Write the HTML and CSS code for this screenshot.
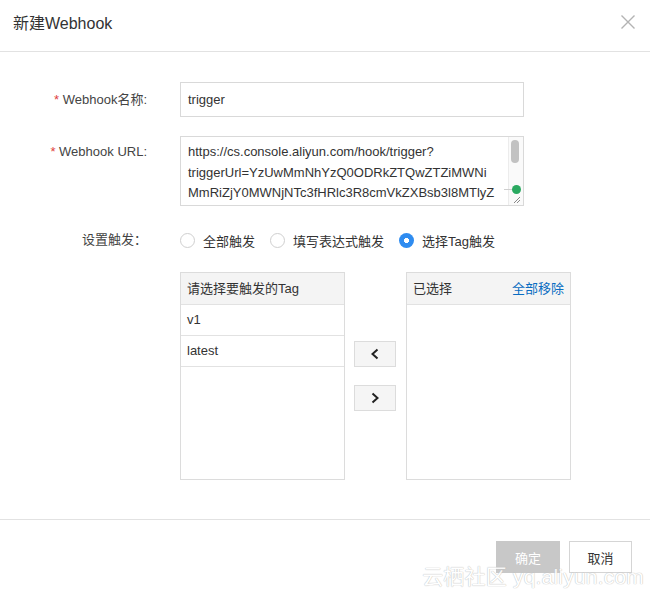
FILE: index.html
```html
<!DOCTYPE html>
<html>
<head>
<meta charset="utf-8">
<link rel="stylesheet" href="styles.css">
</head>
<body>
<div class="dialog">
  <div class="header">
    <div class="title">新建Webhook</div>
    <div class="close">
      <svg width="16" height="16" viewBox="0 0 16 16"><path d="M1.5 1.5 L14.5 14.5 M14.5 1.5 L1.5 14.5" stroke="#b3b3b3" stroke-width="1.4" fill="none"/></svg>
    </div>
  </div>
  <div class="body">
    <div class="form">
      <div class="label row1"><span class="req">*</span> Webhook名称:</div>
      <div class="input">trigger</div>

      <div class="label row2"><span class="req">*</span> Webhook URL:</div>
      <div class="textarea">
        <div class="ta-text">
          <span>https://cs.console.aliyun.com/hook/trigger?</span>
          <span>triggerUrl=YzUwMmNhYzQ0ODRkZTQwZTZiMWNi</span>
          <span>MmRiZjY0MWNjNTc3fHRlc3R8cmVkZXBsb3l8MTlyZ</span>
          <span>mVubW5pcmdncXu=&amp;secret=6e594f4056575594799</span>
        </div>
        <div class="ta-scroll">
          <div class="thumb"></div>
          <div class="dot-line"></div>
          <div class="dot"></div>
          <svg class="grip" width="8" height="8" viewBox="0 0 8 8"><path d="M7 1 L1 7 M7 4 L4 7" stroke="#888" stroke-width="1"/></svg>
        </div>
      </div>

      <div class="label row3">设置触发：</div>
      <div class="radios">
        <label class="radio"><span class="circle"></span>全部触发</label>
        <label class="radio"><span class="circle"></span>填写表达式触发</label>
        <label class="radio"><span class="circle checked"></span>选择Tag触发</label>
      </div>

      <div></div>
      <div class="transfer">
        <div class="box">
          <div class="box-head">请选择要触发的Tag</div>
          <div class="item">v1</div>
          <div class="item">latest</div>
        </div>
        <div class="ops">
          <div class="op">
            <svg width="10" height="12" viewBox="0 0 10 12"><path d="M7.5 1.5 L2.5 6 L7.5 10.5" stroke="#222" stroke-width="2" fill="none"/></svg>
          </div>
          <div class="op">
            <svg width="10" height="12" viewBox="0 0 10 12"><path d="M2.5 1.5 L7.5 6 L2.5 10.5" stroke="#222" stroke-width="2" fill="none"/></svg>
          </div>
        </div>
        <div class="box">
          <div class="box-head split"><span>已选择</span><span class="link">全部移除</span></div>
        </div>
      </div>
    </div>
  </div>
  <div class="footer">
    <div class="btn primary">确定</div>
    <div class="btn">取消</div>
  </div>
  <div class="watermark">云栖社区 yq.aliyun.com</div>
</div>
</body>
</html>
```

FILE: styles.css
```css
* { box-sizing: border-box; }
html, body { margin: 0; padding: 0; background: #fff; }
body {
  font-family: "Liberation Sans", "Noto Sans CJK SC", sans-serif;
  font-size: 13px;
  color: #333;
}
.dialog {
  position: relative;
  width: 650px;
  height: 593px;
  display: flex;
  flex-direction: column;
}
.header {
  height: 52px;
  border-bottom: 1px solid #e2e2e2;
  display: flex;
  align-items: center;
  justify-content: space-between;
  padding: 0 14px 8px 13px;
}
.title { font-size: 16px; color: #333; }
.close { display: flex; width: 16px; height: 16px; }
.body { padding: 30px 0 40px 0; flex: 0 0 auto; height: 467px; }
.form {
  display: grid;
  grid-template-columns: 147px auto;
  justify-content: start;
  column-gap: 33px;
  row-gap: 19px;
  align-items: start;
}
.label { text-align: right; color: #444; line-height: 20px; }
.label.row1 { padding-top: 8px; }
.label.row2 { padding-top: 6px; }
.label.row3 { padding-top: 5px; }
.req { color: #e0403e; }
.input {
  width: 344px;
  height: 35px;
  border: 1px solid #d9d9d9;
  padding: 0 7px;
  line-height: 33px;
  color: #333;
}
.textarea {
  width: 344px;
  height: 70px;
  border: 1px solid #d9d9d9;
  display: flex;
  overflow: hidden;
}
.ta-text {
  flex: 1;
  padding: 5px 0 0 7px;
  line-height: 20.6px;
  white-space: nowrap;
  overflow: hidden;
  color: #333;
}
.ta-text span { display: block; }
.ta-scroll {
  position: relative;
  width: 15px;
  border-left: 1px solid #ececec;
  background: #fafafa;
}
.thumb {
  position: absolute;
  left: 2px;
  top: 3px;
  width: 8px;
  height: 23px;
  border-radius: 4px;
  background: #c2c2c2;
}
.dot-line {
  position: absolute;
  left: -5px;
  top: 52px;
  width: 10px;
  height: 1px;
  background: #cfcfcf;
}
.dot {
  position: absolute;
  left: 3px;
  top: 48px;
  width: 9px;
  height: 9px;
  border-radius: 50%;
  background: #2aa960;
}
.grip { position: absolute; right: 2px; bottom: 1px; }
.radios {
  display: flex;
  align-items: center;
  height: 30px;
  gap: 15px;
}
.radio { display: flex; align-items: center; gap: 8px; color: #333; }
.circle {
  width: 15px;
  height: 15px;
  border-radius: 50%;
  border: 1px solid #cfcfcf;
  background: #fff;
}
.circle.checked {
  border: none;
  background: radial-gradient(circle, #fff 0 2.3px, #2f8cf0 2.8px);
}
.transfer {
  display: flex;
  align-items: center;
  gap: 9px;
  margin-top: -2px;
}
.box {
  width: 165px;
  height: 208px;
  border: 1px solid #dcdcdc;
  display: flex;
  flex-direction: column;
}
.box-head {
  height: 32px;
  background: #f4f4f4;
  border-bottom: 1px solid #e2e2e2;
  padding: 0 6px;
  line-height: 31px;
  color: #333;
}
.box-head.split { display: flex; justify-content: space-between; padding: 0 6px 0 6px; }
.link { color: #0a6dc2; }
.item {
  height: 31px;
  border-bottom: 1px solid #e2e2e2;
  padding: 0 6px;
  line-height: 30px;
  color: #333;
}
.ops { display: flex; flex-direction: column; gap: 18px; margin-right: 1px; }
.op {
  width: 42px;
  height: 26px;
  border: 1px solid #dcdcdc;
  background: #f5f5f5;
  display: flex;
  align-items: center;
  justify-content: center;
}
.footer {
  border-top: 1px solid #e2e2e2;
  flex: 1;
  display: flex;
  justify-content: flex-end;
  align-items: flex-start;
  padding: 21px 18px 0 0;
  gap: 9px;
}
.btn {
  width: 63px;
  height: 32px;
  border: 1px solid #d5d5d5;
  background: #fff;
  display: flex;
  align-items: center;
  justify-content: center;
  color: #333;
}
.btn.primary {
  width: 64px;
  background: #c8c8c8;
  border-color: #c8c8c8;
  color: #fff;
}
.watermark {
  position: absolute;
  right: 6px;
  bottom: 3px;
  font-size: 21px;
  color: #fff;
  letter-spacing: 0.2px;
  text-shadow: 0 0 1px #b5b5b5, 0 0 1px #c0c0c0;
  opacity: 0.85;
}
```
